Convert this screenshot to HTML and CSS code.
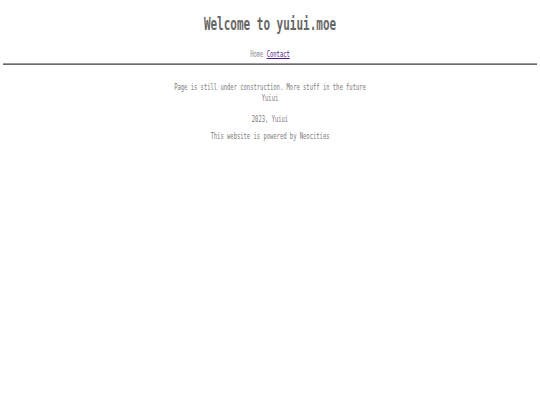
FILE: index.html
```html
<!DOCTYPE html>
<html lang="en">
<head>
<meta charset="utf-8">
<title>yuiui.moe</title>
<link rel="stylesheet" href="styles.css">
</head>
<body>
<header class="top">
  <h1 class="title">Welcome to yuiui.moe</h1>
  <nav class="nav"><span class="nav-home">Home</span> <a class="nav-link" href="#contact">Contact</a></nav>
</header>
<hr class="rule">
<main class="content">
  <p class="intro">Page is still under construction. More stuff in the future<br>Yuiui</p>
  <p class="year">2023, Yuiui</p>
  <p class="powered">This website is powered by Neocities</p>
</main>
</body>
</html>
```
FILE: styles.css
```css
html, body {
  margin: 0;
  padding: 0;
  background: #ffffff;
}
body {
  padding: 0 3px;
  font-family: "DejaVu Sans Mono", monospace;
  color: #7a7a7a;
}
.top {
  text-align: center;
  transform: scaleX(0.61);
  transform-origin: center;
}
.title {
  margin: 0;
  padding-top: 13px;
  font-size: 18px;
  line-height: 22px;
  font-weight: bold;
  color: #666666;
}
.nav {
  margin-top: 13.5px;
  font-size: 9px;
  line-height: 11px;
}
.nav-home {
  color: #8a8a8a;
}
.nav-link {
  color: #551a8b;
}
.rule {
  margin: 3px 0 0 0;
  border: 0;
  border-top: 1px solid #9a9a9a;
  border-bottom: 1px solid #6a6a6a;
  height: 0;
}
.content {
  text-align: center;
  font-size: 9px;
  line-height: 11px;
  transform: scaleX(0.61);
  transform-origin: center;
}
.content p {
  margin: 0;
}
.intro {
  padding-top: 17.5px;
}
.year {
  margin-top: 10px !important;
}
.powered {
  margin-top: 6px !important;
}
```
